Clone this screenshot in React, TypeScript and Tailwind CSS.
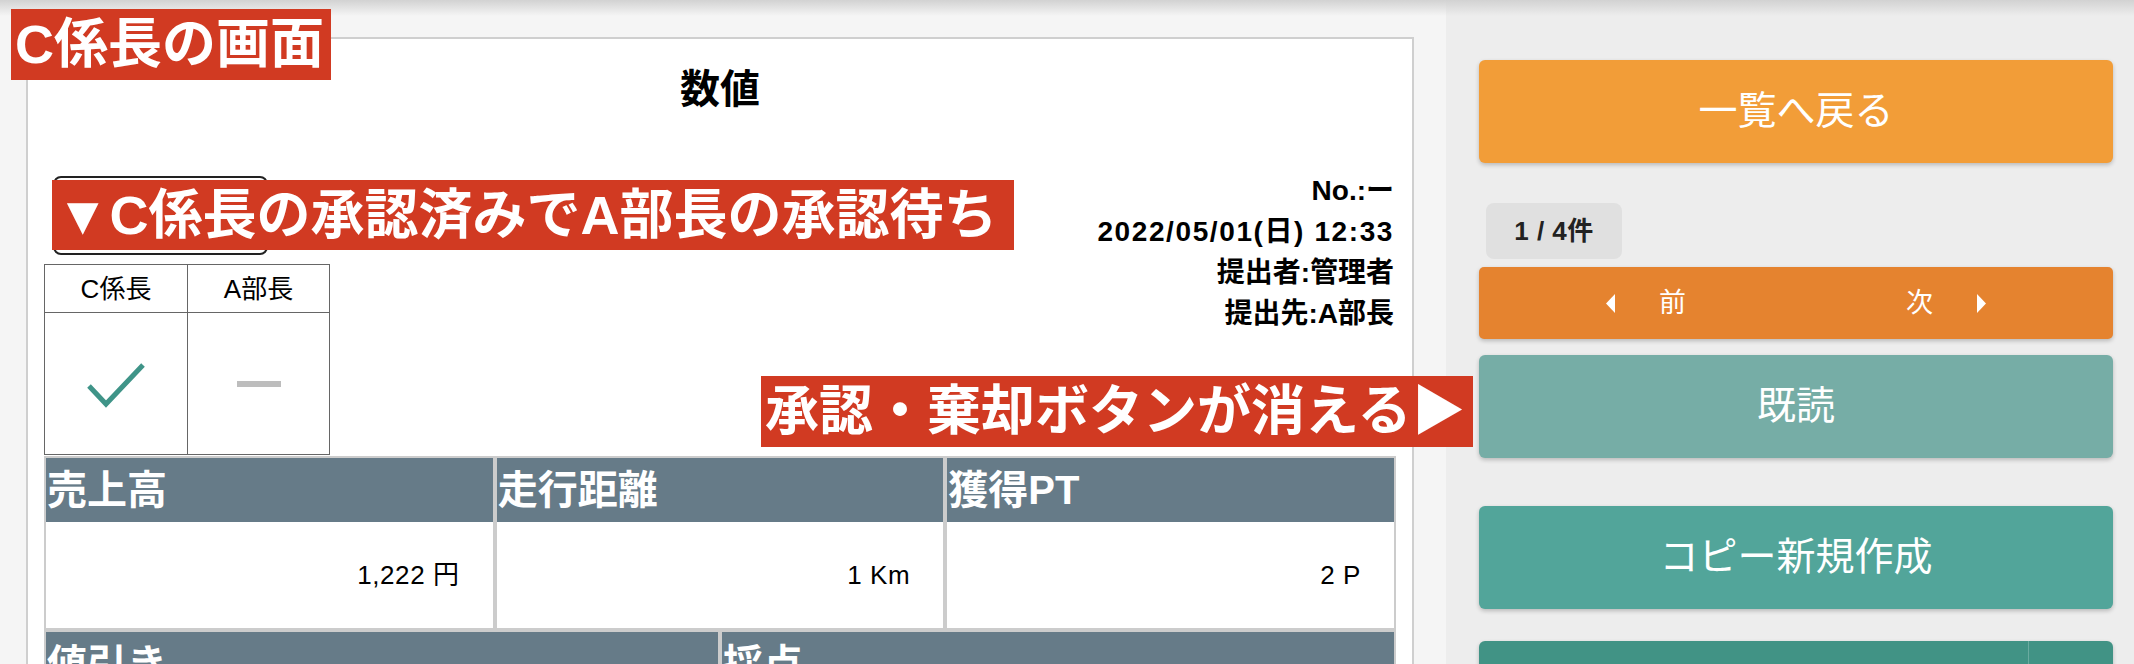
import React from "react";

const fields1 = [
  { label: "売上高", value: "1,222 円" },
  { label: "走行距離", value: "1 Km" },
  { label: "獲得PT", value: "2 P" },
];

const fields2 = [{ label: "値引き" }, { label: "採点" }];

const Note = ({ className, children }: { className: string; children: React.ReactNode }) => (
  <div
    className={`absolute bg-[#d13a22] pl-[4px] text-[54px] font-bold whitespace-nowrap text-white ${className}`}
  >
    {children}
  </div>
);

const ApprovalTable = () => (
  <div className="mt-[9px] flex w-[286px] border border-[#666666] text-[26px] leading-none">
    <div className="w-[143px] border-r border-[#666666]">
      <div className="flex h-[48px] items-center justify-center border-b border-[#666666]">C係長</div>
      <div className="flex h-[141px] items-center justify-center">
        <svg width="58" height="48" viewBox="0 0 58 48">
          <polyline points="2,26 19,44 56,5" fill="none" stroke="#3f9488" strokeWidth="5" />
        </svg>
      </div>
    </div>
    <div className="w-[141px]">
      <div className="flex h-[48px] items-center justify-center border-b border-[#666666]">A部長</div>
      <div className="flex h-[141px] items-center justify-center">
        <div className="h-[6px] w-[44px] bg-[#bdbdbd]" />
      </div>
    </div>
  </div>
);

const FieldCell = ({ label, value }: { label: string; value?: string }) => (
  <div className="bg-white">
    <div className="h-[64px] bg-[#667b88] pl-[1px] text-[40px] leading-[64px] font-bold text-white">
      {label}
    </div>
    <div className="flex h-[106px] items-center justify-end pr-[33px] text-[26px] tracking-[0.6px]">
      {value}
    </div>
  </div>
);

const Caret = ({ dir }: { dir: "left" | "right" }) => (
  <svg width="9" height="19" viewBox="0 0 9 19">
    <polygon points={dir === "left" ? "9,0 9,19 0,9.5" : "0,0 0,19 9,9.5"} fill="#ffffff" />
  </svg>
);

const shadow = "shadow-[0_2px_4px_rgba(0,0,0,0.22)]";

export default function App() {
  return (
    <div className="relative flex h-[664px] w-[2134px] overflow-hidden bg-[#f5f5f5] font-['Liberation_Sans','Noto_Sans_CJK_JP',sans-serif] text-black">
      {/* main sheet */}
      <div className="w-[1446px] shrink-0 pt-[37px] pl-[26px]">
        <div className="w-[1388px] border-2 border-[#cfcfcf] bg-white px-[16px]">
          <div className="flex h-[100px] items-center justify-center text-[40px] font-bold">数値</div>
          <div className="flex h-[317px] justify-between">
            <div className="pt-[37px]">
              <div className="ml-[9px] h-[79px] w-[215px] rounded-[8px] border-2 border-[#222222]" />
              <ApprovalTable />
            </div>
            <div className="pt-[31px] pr-[2px] text-right text-[28px] leading-[41px] font-bold">
              <p>No.:ー</p>
              <p className="tracking-[1.6px]">2022/05/01(日) 12:33</p>
              <p>提出者:管理者</p>
              <p>提出先:A部長</p>
            </div>
          </div>
          <div className="flex flex-col gap-[4px] bg-[#cccccc] p-[2px]">
            <div className="grid grid-cols-3 gap-[4px]">
              {fields1.map((f) => (
                <FieldCell key={f.label} label={f.label} value={f.value} />
              ))}
            </div>
            <div className="grid grid-cols-2 gap-[4px]">
              {fields2.map((f) => (
                <FieldCell key={f.label} label={f.label} />
              ))}
            </div>
          </div>
        </div>
      </div>

      {/* side actions */}
      <aside className="flex flex-1 flex-col bg-[#ededed] pt-[60px] pr-[21px] pl-[33px] text-white">
        <button className={`h-[103px] shrink-0 rounded-[6px] bg-[#f29d38] text-[39px] ${shadow}`}>一覧へ戻る</button>
        <div className="mt-[40px] ml-[7px] flex h-[56px] w-[136px] shrink-0 items-center justify-center rounded-[8px] bg-[#e0e0e0] text-[26px] font-bold tracking-[0.5px] text-[#222222]">
          1 / 4件
        </div>
        <div className={`mt-[8px] flex h-[72px] shrink-0 items-center justify-center gap-[220px] rounded-[5px] bg-[#e5832f] text-[27px] ${shadow}`}>
          <span className="flex w-[80px] items-center justify-between">
            <Caret dir="left" />
            前
          </span>
          <span className="flex w-[80px] items-center justify-between">
            次
            <Caret dir="right" />
          </span>
        </div>
        <button className={`mt-[16px] h-[103px] shrink-0 rounded-[6px] bg-[#76ada6] text-[39px] ${shadow}`}>既読</button>
        <button className={`mt-[48px] h-[103px] shrink-0 rounded-[6px] bg-[#52a59a] text-[39px] ${shadow}`}>
          コピー新規作成
        </button>
        <div className={`mt-[32px] flex h-[103px] shrink-0 rounded-[6px] bg-[#419385] ${shadow}`}>
          <div className="flex-1" />
          <div className="w-[85px] border-l border-[#6aaba0]" />
        </div>
      </aside>

      {/* top bar shadow */}
      <div className="pointer-events-none absolute inset-x-0 top-0 h-[16px] bg-linear-to-b from-[#d2d2d2] to-transparent" />

      {/* annotations */}
      <Note className="top-[9px] left-[11px] h-[71px] w-[320px] leading-[71px]">C係長の画面</Note>
      <Note className="top-[180px] left-[52px] h-[70px] w-[962px] leading-[70px]">▼C係長の承認済みでA部長の承認待ち</Note>
      <Note className="top-[376px] left-[761px] h-[71px] w-[712px] leading-[71px]">承認・棄却ボタンが消える▶</Note>
    </div>
  );
}
